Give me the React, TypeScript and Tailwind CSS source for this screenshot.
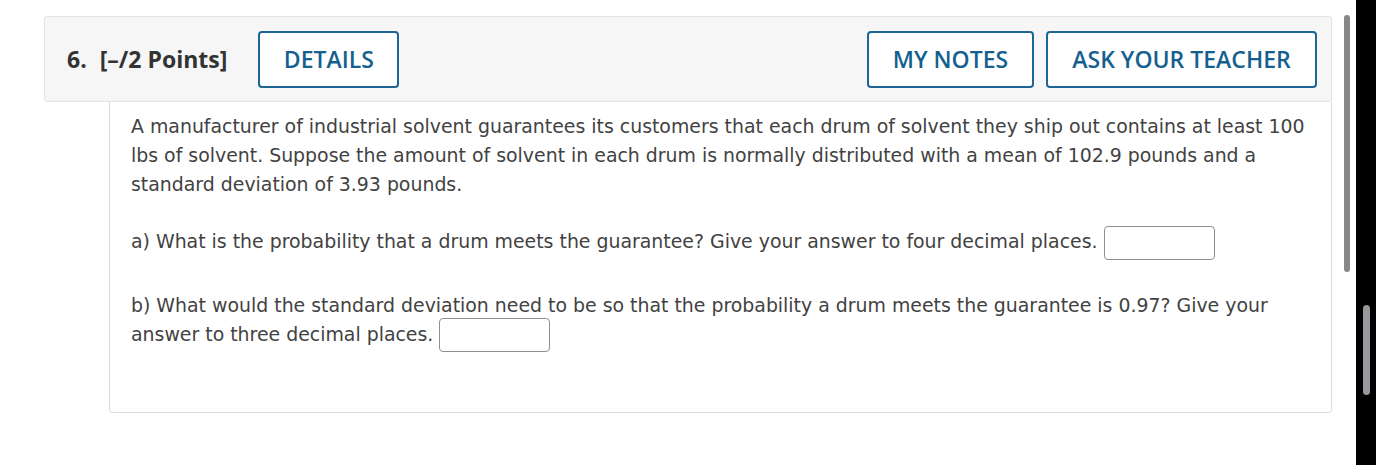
import React from 'react';

const btn =
    "h-[57px] border-2 border-[#1d6594] rounded-[4px] bg-white text-[#14608f] text-[23px] font-semibold uppercase flex items-center justify-center";

function AnswerBox() {
    return (
        <span className="inline-block align-middle w-[111px] h-[34px] -my-[3px] border border-[#8f8f8f] rounded-[4px] bg-white" />
    );
}

export default function App() {
    return (
        <div className="flex w-[1376px] h-[465px] bg-white overflow-hidden">
            <div className="w-[1356px] flex shrink-0">
                <div className="w-[1288px] ml-[44px] pt-[16px] shrink-0">
                    {/* question header */}
                    <div className="h-[86px] bg-[#f6f6f6] border border-[#e2e2e2] rounded-[3px] flex items-center pl-[22px] pr-[14px] font-['Open_Sans',sans-serif]">
                        <span className="text-[23px] font-bold text-[#333]">6.</span>
                        <span className="ml-[13px] text-[23px] font-bold text-[#333]">[–/2 Points]</span>
                        <button className={`${btn} ml-[31px] w-[141px]`}>Details</button>
                        <div className="ml-auto flex gap-[12px]">
                            <button className={`${btn} w-[167px]`}>My Notes</button>
                            <button className={`${btn} w-[271px]`}>Ask Your Teacher</button>
                        </div>
                    </div>

                    {/* question body */}
                    <div className="ml-[65px] h-[311px] border border-t-0 border-[#dcdcdc] rounded-b-[4px] pl-[21px] pr-[18px] pt-[10px] font-['DejaVu_Sans',sans-serif] text-[18.9px] leading-[29px] text-[#424242]">
                        <p>
                            A manufacturer of industrial solvent guarantees its customers that each drum of solvent they ship out contains at least 100 lbs of solvent. Suppose the amount of solvent in each drum is normally distributed with a mean of 102.9 pounds and a standard deviation of 3.93 pounds.
                        </p>
                        <p className="mt-[28px]">
                            a) What is the probability that a drum meets the guarantee? Give your answer to four decimal places.{" "}
                            <AnswerBox />
                        </p>
                        <p className="mt-[34px]">
                            b) What would the standard deviation need to be so that the probability a drum meets the guarantee is 0.97? Give your answer to three decimal places.{" "}
                            <AnswerBox />
                        </p>
                    </div>
                </div>
                {/* inner scrollbar */}
                <div className="ml-[12px] pt-[15px]">
                    <div className="w-[6px] h-[257px] rounded-full bg-[#878787]" />
                </div>
            </div>
            {/* window scrollbar */}
            <div className="w-[20px] h-full bg-black pt-[305px] flex justify-center shrink-0">
                <div className="w-[7px] h-[90px] rounded-full bg-[#97979c]" />
            </div>
        </div>
    );
}
